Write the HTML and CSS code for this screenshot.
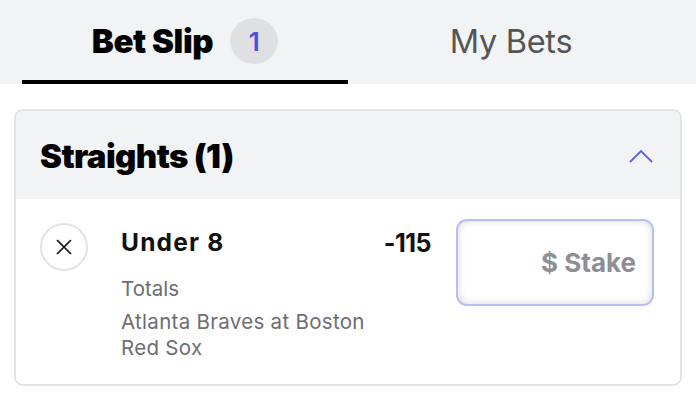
FILE: index.html
```html
<!DOCTYPE html>
<html>
<head>
<meta charset="utf-8">
<link rel="stylesheet" href="styles.css">
</head>
<body>
<div class="tabs">
  <div class="tab active">
    <span class="tab-label">Bet Slip</span>
    <span class="badge">1</span>
  </div>
  <div class="tab">
    <span class="tab-label-plain">My Bets</span>
  </div>
</div>
<div class="content">
  <div class="card">
    <div class="card-head">
      <span class="card-title">Straights (1)</span>
      <svg class="chevron" width="26" height="16" viewBox="0 0 26 16"><path d="M2 14 L13 3 L24 14" fill="none" stroke="#5b5ee6" stroke-width="1.8"/></svg>
    </div>
    <div class="bet">
      <div class="remove">
        <svg width="20" height="20" viewBox="0 0 20 20"><path d="M3 3 L17 17 M17 3 L3 17" stroke="#111" stroke-width="1.7" fill="none"/></svg>
      </div>
      <div class="info">
        <div class="sel">Under 8</div>
        <div class="market">Totals</div>
        <div class="event">Atlanta Braves at Boston<br>Red Sox</div>
      </div>
      <div class="odds">-115</div>
      <div class="stake">$ Stake</div>
    </div>
  </div>
</div>
</body>
</html>
```
FILE: styles.css
```css
* { box-sizing: border-box; }
body { margin: 0; background: #fff; font-family: Inter, "Noto Sans", sans-serif; color: #111; }
.tabs { display: flex; background: #f2f3f5; height: 84px; padding: 0 22px; }
.tab { flex: 0 0 326px; display: flex; align-items: center; justify-content: center; gap: 17px; height: 84px; padding-bottom: 2px; }
.tab.active { border-bottom: 4px solid #000; padding-top: 4px; }
.tab-label { font-family: Inter, sans-serif; font-weight: 900; font-size: 33px; letter-spacing: -0.4px; color: #000; }
.tab-label-plain { font-family: Inter, sans-serif; font-size: 32.5px; letter-spacing: -0.3px; color: #555; }
.badge { width: 48px; height: 46px; border-radius: 50%; background: #dfe0e4; color: #4a50e6; font-family: Inter, sans-serif; font-weight: 600; font-size: 26px; display: flex; align-items: center; justify-content: center; }
.content { padding: 25px 14px; }
.card { border: 2px solid #e2e3e6; border-radius: 9px; overflow: hidden; }
.card-head { background: #f2f3f5; height: 88px; display: flex; align-items: center; justify-content: space-between; padding: 2px 26px 0 24px; }
.card-title { font-family: Inter, sans-serif; font-weight: 900; font-size: 33px; letter-spacing: -0.6px; color: #000; }
.bet { display: flex; align-items: flex-start; padding: 20px 26px 23px 24px; }
.remove { width: 48px; height: 48px; border-radius: 50%; border: 2px solid #e2e3e6; display: flex; align-items: center; justify-content: center; margin-top: 4px; }
.info { margin-left: 33px; flex: 1; }
.sel { font-weight: 700; font-size: 24.5px; line-height: 32px; margin-top: 7px; letter-spacing: 1.2px; }
.market { font-size: 20.5px; color: #6d6d73; margin-top: 18px; line-height: 26px; }
.event { font-size: 20.5px; color: #6d6d73; line-height: 26px; margin-top: 7px; letter-spacing: 0.3px; }
.odds { font-weight: 700; font-size: 25px; margin-top: 9px; margin-right: 25px; letter-spacing: -0.5px; }
.stake { width: 198px; height: 87px; border: 2px solid #b9bdf4; border-radius: 11px; box-shadow: inset 0 0 8px rgba(0,0,0,0.15); display: flex; align-items: center; justify-content: flex-end; padding-right: 16px; font-weight: 700; font-size: 26px; color: #8e8e94; }
```
